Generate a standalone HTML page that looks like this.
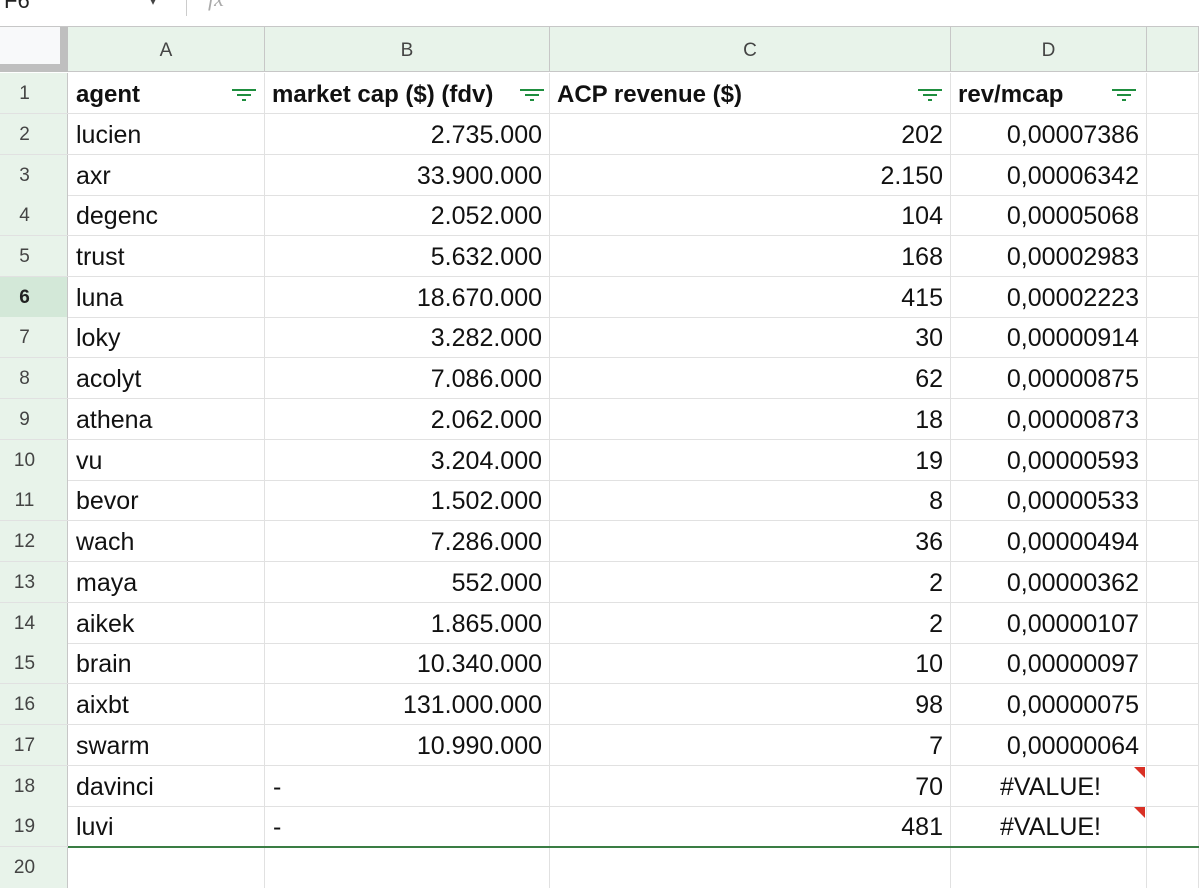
<!DOCTYPE html>
<html><head><meta charset="utf-8"><style>
body{margin:0;width:1199px;height:883px;overflow:hidden;background:#fff;font-family:"Liberation Sans",Arial,sans-serif;position:relative}
.a{position:absolute}
.r{position:absolute;left:0;width:1199px;height:41px;border-bottom:1px solid #e1e1e1;box-sizing:border-box}
.n{position:absolute;left:0;width:68px;height:100%;background:#e8f3ea;border-right:1px solid #c7c7c7;box-sizing:border-box;font-size:19px;color:#444;text-align:center;padding-right:18px;line-height:42px}
.c{position:absolute;top:0;height:100%;border-right:1px solid #e1e1e1;box-sizing:border-box;font-size:25px;color:#111;line-height:43px;white-space:nowrap;overflow:hidden}
.A{left:68px;width:197px;padding-left:8px}
.B{left:265px;width:285px;text-align:right;padding-right:7px}
.C{left:550px;width:401px;text-align:right;padding-right:7px}
.D{left:951px;width:196px;text-align:right;padding-right:7px}
.E{left:1147px;width:52px}
.h .c{font-weight:bold;font-size:24px}
.f{position:absolute;right:8px;top:16px;width:24px;height:12px}
.tri{position:absolute;right:1px;top:1px;width:0;height:0;border-top:11px solid #d93025;border-left:11px solid transparent}
.hd{position:absolute;top:27px;height:45px;background:#e8f3ea;border-right:1px solid #c7c7c7;border-bottom:1px solid #c7c7c7;box-sizing:border-box;text-align:center;font-size:19px;color:#444;line-height:48px}
</style></head><body>
<div class="a" style="left:0;top:0;width:1199px;height:26px;border-bottom:1px solid #c7c7c7;background:#fff"></div>
<div class="a" style="left:4px;top:-12px;font-size:22px;color:#222">F6</div>
<div class="a" style="left:150px;top:-6px;font-size:12px;color:#444">▾</div>
<div class="a" style="left:186px;top:0;width:1px;height:16px;background:#ccc"></div>
<div class="a" style="left:208px;top:-14px;font-size:22px;color:#aaa;font-style:italic;font-family:'Liberation Serif',serif">fx</div>
<div class="a" style="left:0;top:27px;width:68px;height:45px;background:#bfbfbf"></div>
<div class="a" style="left:0;top:27px;width:60px;height:37px;background:#f8f9fa"></div>
<div class="hd" style="left:68px;width:197px">A</div>
<div class="hd" style="left:265px;width:285px">B</div>
<div class="hd" style="left:550px;width:401px">C</div>
<div class="hd" style="left:951px;width:196px">D</div>
<div class="hd" style="left:1147px;width:52px"></div>

<div class="r h" style="top:73px"><div class="n">1</div>
<div class="c A">agent<svg class="f" viewBox="0 0 24 12"><path d="M0 1H24M5 6H19M10 11H14" stroke="#1e8e3e" stroke-width="2"/></svg></div>
<div class="c" style="left:265px;width:285px;padding-left:7px;box-sizing:border-box">market cap ($) (fdv)<svg class="f" style="right:5px" viewBox="0 0 24 12"><path d="M0 1H24M5 6H19M10 11H14" stroke="#1e8e3e" stroke-width="2"/></svg></div>
<div class="c" style="left:550px;width:401px;padding-left:7px;box-sizing:border-box">ACP revenue ($)<svg class="f" viewBox="0 0 24 12"><path d="M0 1H24M5 6H19M10 11H14" stroke="#1e8e3e" stroke-width="2"/></svg></div>
<div class="c" style="left:951px;width:196px;padding-left:7px;box-sizing:border-box">rev/mcap<svg class="f" style="right:10px" viewBox="0 0 24 12"><path d="M0 1H24M5 6H19M10 11H14" stroke="#1e8e3e" stroke-width="2"/></svg></div>
<div class="c E"></div></div>

<div class="r" style="top:113.7px"><div class="n">2</div><div class="c A">lucien</div><div class="c B">2.735.000</div><div class="c C">202</div><div class="c D">0,00007386</div><div class="c E"></div></div>
<div class="r" style="top:154.5px"><div class="n">3</div><div class="c A">axr</div><div class="c B">33.900.000</div><div class="c C">2.150</div><div class="c D">0,00006342</div><div class="c E"></div></div>
<div class="r" style="top:195.2px"><div class="n">4</div><div class="c A">degenc</div><div class="c B">2.052.000</div><div class="c C">104</div><div class="c D">0,00005068</div><div class="c E"></div></div>
<div class="r" style="top:235.9px"><div class="n">5</div><div class="c A">trust</div><div class="c B">5.632.000</div><div class="c C">168</div><div class="c D">0,00002983</div><div class="c E"></div></div>
<div class="r" style="top:276.7px"><div class="n" style="background:#d3e8d8;font-weight:bold;color:#222">6</div><div class="c A">luna</div><div class="c B">18.670.000</div><div class="c C">415</div><div class="c D">0,00002223</div><div class="c E"></div></div>
<div class="r" style="top:317.4px"><div class="n">7</div><div class="c A">loky</div><div class="c B">3.282.000</div><div class="c C">30</div><div class="c D">0,00000914</div><div class="c E"></div></div>
<div class="r" style="top:358.2px"><div class="n">8</div><div class="c A">acolyt</div><div class="c B">7.086.000</div><div class="c C">62</div><div class="c D">0,00000875</div><div class="c E"></div></div>
<div class="r" style="top:398.9px"><div class="n">9</div><div class="c A">athena</div><div class="c B">2.062.000</div><div class="c C">18</div><div class="c D">0,00000873</div><div class="c E"></div></div>
<div class="r" style="top:439.6px"><div class="n">10</div><div class="c A">vu</div><div class="c B">3.204.000</div><div class="c C">19</div><div class="c D">0,00000593</div><div class="c E"></div></div>
<div class="r" style="top:480.4px"><div class="n">11</div><div class="c A">bevor</div><div class="c B">1.502.000</div><div class="c C">8</div><div class="c D">0,00000533</div><div class="c E"></div></div>
<div class="r" style="top:521.1px"><div class="n">12</div><div class="c A">wach</div><div class="c B">7.286.000</div><div class="c C">36</div><div class="c D">0,00000494</div><div class="c E"></div></div>
<div class="r" style="top:561.9px"><div class="n">13</div><div class="c A">maya</div><div class="c B">552.000</div><div class="c C">2</div><div class="c D">0,00000362</div><div class="c E"></div></div>
<div class="r" style="top:602.6px"><div class="n">14</div><div class="c A">aikek</div><div class="c B">1.865.000</div><div class="c C">2</div><div class="c D">0,00000107</div><div class="c E"></div></div>
<div class="r" style="top:643.3px"><div class="n">15</div><div class="c A">brain</div><div class="c B">10.340.000</div><div class="c C">10</div><div class="c D">0,00000097</div><div class="c E"></div></div>
<div class="r" style="top:684.1px"><div class="n">16</div><div class="c A">aixbt</div><div class="c B">131.000.000</div><div class="c C">98</div><div class="c D">0,00000075</div><div class="c E"></div></div>
<div class="r" style="top:724.8px"><div class="n">17</div><div class="c A">swarm</div><div class="c B">10.990.000</div><div class="c C">7</div><div class="c D">0,00000064</div><div class="c E"></div></div>
<div class="r" style="top:765.6px"><div class="n">18</div><div class="c A">davinci</div><div class="c B" style="text-align:left;padding-left:8px">-</div><div class="c C">70</div><div class="c D" style="padding-right:45px">#VALUE!<div class="tri"></div></div><div class="c E"></div></div>
<div class="r" style="top:806.3px"><div class="n">19</div><div class="c A">luvi</div><div class="c B" style="text-align:left;padding-left:8px">-</div><div class="c C">481</div><div class="c D" style="padding-right:45px">#VALUE!<div class="tri"></div></div><div class="c E"></div></div>
<div class="r" style="top:847px;border-bottom:none"><div class="n">20</div><div class="c A"></div><div class="c B"></div><div class="c C"></div><div class="c D"></div><div class="c E"></div></div>
<div class="a" style="left:68px;top:846px;width:1131px;height:2px;background:#3a7d44"></div>
</body></html>
